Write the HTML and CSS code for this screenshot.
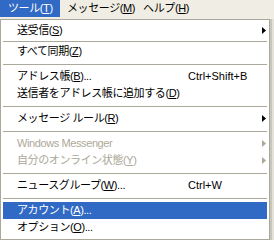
FILE: index.html
```html
<!DOCTYPE html>
<html lang="ja">
<head>
  <meta charset="UTF-8">
  <title>ツール メニュー</title>
  <link rel="stylesheet" href="styles.css">
</head>
<body>
  <div class="menubar">
    <div class="top-item open">ツール(<u>T</u>)</div>
    <div class="top-item">メッセージ(<u>M</u>)</div>
    <div class="top-item">ヘルプ(<u>H</u>)</div>
  </div>

  <div class="stage">
    <ul class="menu">
      <li class="item">
        <span class="label">送受信(<u>S</u>)</span>
        <span class="key"></span>
        <svg class="arrow" width="4" height="7" viewBox="0 0 4 7"><polygon points="0,0 4,3.5 0,7"/></svg>
      </li>
      <li class="sep short"></li>
      <li class="item">
        <span class="label">すべて同期(<u>Z</u>)</span>
      </li>
      <li class="sep"></li>
      <li class="item">
        <span class="label">アドレス帳(<u>B</u>)...</span>
        <span class="key">Ctrl+Shift+B</span>
      </li>
      <li class="item">
        <span class="label">送信者をアドレス帳に追加する(<u>D</u>)</span>
      </li>
      <li class="sep"></li>
      <li class="item">
        <span class="label">メッセージ ルール(<u>R</u>)</span>
        <span class="key"></span>
        <svg class="arrow" width="4" height="7" viewBox="0 0 4 7"><polygon points="0,0 4,3.5 0,7"/></svg>
      </li>
      <li class="sep"></li>
      <li class="item disabled">
        <span class="label">Windows Messenger</span>
        <span class="key"></span>
        <svg class="arrow" width="4" height="7" viewBox="0 0 4 7"><polygon points="0,0 4,3.5 0,7"/></svg>
      </li>
      <li class="item disabled">
        <span class="label">自分のオンライン状態(<u>Y</u>)</span>
        <span class="key"></span>
        <svg class="arrow" width="4" height="7" viewBox="0 0 4 7"><polygon points="0,0 4,3.5 0,7"/></svg>
      </li>
      <li class="sep"></li>
      <li class="item">
        <span class="label">ニュースグループ(<u>W</u>)...</span>
        <span class="key">Ctrl+W</span>
      </li>
      <li class="sep"></li>
      <li class="item active">
        <span class="label">アカウント(<u>A</u>)...</span>
        <span class="key"></span>
      </li>
      <li class="item">
        <span class="label">オプション(<u>O</u>)...</span>
        <span class="key"></span>
      </li>
    </ul>
    <div class="behind"></div>
  </div>
</body>
</html>
```

FILE: styles.css
```css
body {
  margin: 0;
  width: 274px;
  height: 240px;
  overflow: hidden;
  background: #f0eee4;
  font-family: "Liberation Sans", "Noto Sans CJK JP", sans-serif;
  font-size: 11px;
  color: #000;
}

u {
  text-decoration: underline;
  text-underline-offset: 1px;
}

.menubar {
  display: flex;
  height: 19px;
}

.top-item {
  height: 17px;
  line-height: 17px;
  padding: 0 1px 0 7px;
  white-space: nowrap;
  flex-shrink: 0;
  letter-spacing: -0.4px;
}

.top-item.open {
  background: #316ac5;
  color: #fff;
  width: 52px;
  padding: 0 0 0 8px;
}

.stage {
  display: flex;
  height: 221px;
}

.menu {
  list-style: none;
  margin: 0;
  width: 264px;
  flex-shrink: 0;
  background: #fff;
  border: 1px solid #aca899;
  padding: 2px;
}

.behind {
  flex: 1;
  border-left: 2px solid #c9c7bd;
  background: #e4e2d8;
}

.item {
  display: flex;
  align-items: center;
  height: 17px;
  line-height: 17px;
  padding-left: 14px;
  white-space: nowrap;
}

.label {
  width: 171px;
  flex-shrink: 0;
  letter-spacing: -0.4px;
}

.key {
  flex: 1;
}

.arrow {
  fill: #000;
  margin-right: 1px;
}

.disabled {
  color: #aca899;
}

.disabled .arrow {
  fill: #aca899;
}

.active {
  background: #316ac5;
  color: #fff;
}

.sep {
  height: 8px;
  display: flex;
  align-items: center;
}

.sep::before {
  content: "";
  flex: 1;
  height: 1px;
  background: #aca899;
}

.sep.short {
  height: 4px;
}
```
